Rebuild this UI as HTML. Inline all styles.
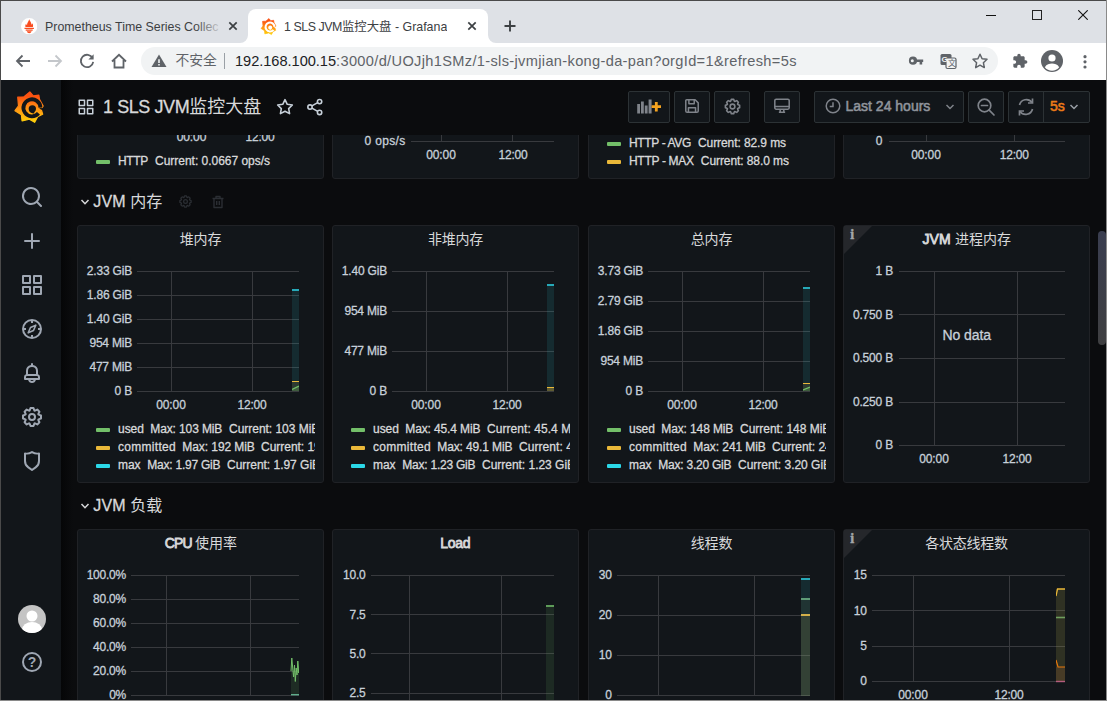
<!DOCTYPE html>
<html lang="zh">
<head>
<meta charset="utf-8">
<title>1 SLS JVM监控大盘 - Grafana</title>
<style>
*{box-sizing:border-box;margin:0;padding:0}
html,body{width:1107px;height:701px;overflow:hidden;background:#0b0c0e}
body{position:relative;font-family:"Liberation Sans","Noto Sans CJK SC",sans-serif;color:#c7d0d9}
.abs{position:absolute}
#win{position:absolute;left:0;top:0;width:1107px;height:701px;overflow:hidden}
#tabbar{position:absolute;left:0;top:0;width:1107px;height:43px;background:#dee1e6}
#addr{position:absolute;left:0;top:43px;width:1107px;height:37px;background:#fff}
.tabtxt{position:absolute;font-size:12.4px;color:#3c4043;white-space:nowrap;top:19px;line-height:16px;overflow:hidden}
#acttab{position:absolute;left:248px;top:9px;width:240px;height:34px;background:#fff;border-radius:8px 8px 0 0}
#pill{position:absolute;left:141px;top:47px;width:857px;height:28px;border-radius:14px;background:#f1f3f4}
.url{position:absolute;left:235px;top:52px;font-size:14.6px;line-height:18px;color:#5f6368;white-space:nowrap;letter-spacing:.34px}
.url b{font-weight:400;color:#202124;letter-spacing:-.03px}
#side{position:absolute;left:1px;top:80px;width:60px;height:621px;background:#12161a}
#navbar{position:absolute;left:61px;top:80px;width:1046px;height:55px;background:#0b0c0e;z-index:5}
#title{position:absolute;left:103px;top:95px;font-size:18px;line-height:24px;letter-spacing:-.42px;-webkit-text-stroke:.3px;color:#d8d9da;white-space:nowrap;z-index:6}
.btn{position:absolute;top:91px;height:32px;border:1px solid #2c3235;border-radius:2px;background:#12161a;z-index:6}
.z6{z-index:6}
.panel{position:absolute;background:#12161a;border:1px solid #202226;border-radius:3px;overflow:hidden}
.pt{position:absolute;text-align:center;font-size:14px;font-weight:700;line-height:18px;color:#d8d9da;white-space:nowrap}
.rowt{position:absolute;font-size:17px;line-height:22px;color:#d8d9da;white-space:nowrap}
.ax{position:absolute;font-size:12px;line-height:14px;color:#c7d0d9;white-space:nowrap;font-weight:400}
.ay{text-align:right}
.ac{text-align:center}
.lg{position:absolute;font-size:12px;line-height:14px;color:#d8d9da;white-space:nowrap;overflow:hidden;height:16px}
.lg span{position:absolute;top:0}
.sw{position:absolute;width:14px;height:4px;border-radius:1px}
.gl{position:absolute;background:#383a3e}
.g,.lg{-webkit-text-stroke:.3px}
i,.c{font-style:normal;-webkit-text-stroke:0}
.lb b{font-weight:400;-webkit-text-stroke:.8px}
#title i{letter-spacing:0}
</style>
</head>
<body>
<div id="win">
<div id="tabbar"></div>
<div id="acttab"></div>
<svg class="abs" style="left:240px;top:35px;" width="8" height="8" viewBox="0 0 8 8"><path d="M0 8 H8 V0 A8 8 0 0 1 0 8Z" fill="#fff"/></svg>
<svg class="abs" style="left:488px;top:35px;" width="8" height="8" viewBox="0 0 8 8"><path d="M8 8 H0 V0 A8 8 0 0 0 8 8Z" fill="#fff"/></svg>
<div id="addr"></div>
<div id="pill"></div>
<div class="abs" style="left:0;top:0;width:1107px;height:1px;background:#4a4a4a;z-index:20"></div>
<div class="abs" style="left:0;top:0;width:1px;height:701px;background:#4a4a4a;z-index:20"></div>
<div class="abs" style="left:1106px;top:0;width:1px;height:701px;background:#8a8a8a;z-index:20"></div>
<div class="abs" style="left:0;top:700px;width:1107px;height:1px;background:#8a8a8a;z-index:20"></div>
<svg class="abs" style="left:20.7px;top:17.8px;" width="16.4" height="16.4" viewBox="0 0 16 16"><circle cx="8" cy="8" r="8" fill="#fff"/><path d="M8 1.200 C8.400 3 10.400 4.200 10.200 6.600 C10.900 6.100 11.100 5.200 11.100 5.200 C12 6.600 11.900 8 11.600 8.900 H4.400 C4 7.800 4.200 6.400 5 5.500 C5.100 6.300 5.500 6.800 5.900 7 C5.600 4.800 7.600 3.400 8 1.200Z M3.400 9.400 H12.600 V10.700 H3.400Z M4.600 11.300 H11.400 V12.400 H4.600Z M5.600 13 H10.400 C10 14.200 9 14.800 8 14.800 S6 14.200 5.600 13Z" fill="#f94d20"/></svg>
<div class="tabtxt" style="left:45px;width:178px">Prometheus Time Series Collec</div>
<div class="abs" style="left:195px;top:14px;width:28px;height:24px;background:linear-gradient(90deg,rgba(222,225,230,0),#dee1e6)"></div>
<svg class="abs" style="left:224.7px;top:18px;" width="16" height="16" viewBox="0 0 16 16"><path d="M4.3 4.3 L11.7 11.7 M11.7 4.3 L4.3 11.7" stroke="#3c4043" stroke-width="1.7" fill="none"/></svg>
<svg width="0" height="0" style="position:absolute"><defs><linearGradient id="gg" x1="0" y1="1" x2="0" y2="0"><stop offset="0" stop-color="#ffd20a"/><stop offset="0.5" stop-color="#ff8c14"/><stop offset="0.85" stop-color="#fb5310"/><stop offset="1" stop-color="#fb4f14"/></linearGradient></defs></svg>
<svg class="abs" style="left:258.7px;top:15.5px;" width="20.8" height="20.8" viewBox="0 0 40 40"><path d="M19.1 4.9 L22.6 9.0 L28.2 8.2 L28.9 12.5 L32.6 19.2 L30.6 22.5 L32.1 27.6 L27.0 30.0 L24.0 35.8 L18.6 32.6 L11.2 34.4 L10.5 28.2 L4.0 24.0 L7.6 19.2 L6.8 10.3 L13.2 9.9Z" fill="url(#gg)" stroke="url(#gg)" stroke-width="1.2" stroke-linejoin="round"/><path d="M29.800 20.900 A8.600 8.600 0 1 0 27.800 26.600" stroke="#fff" stroke-width="3.900" fill="none"/><path d="M28.500 21.300 L35 21.600 L35 24.500 L30.300 22.800Z" fill="#fff"/><circle cx="21.6" cy="22.1" r="3.7" fill="#fff"/><path d="M18.9 23.0 Q19.8 26.6 23.6 26.0" stroke="#fff" stroke-width="1.3" fill="none"/></svg>
<div class="tabtxt" style="left:284px"><span style="letter-spacing:-.45px">1 SLS JVM</span>监控大盘 - Grafana</div>
<svg class="abs" style="left:464px;top:18px;" width="16" height="16" viewBox="0 0 16 16"><path d="M4.3 4.3 L11.7 11.7 M11.7 4.3 L4.3 11.7" stroke="#3c4043" stroke-width="1.7" fill="none"/></svg>
<svg class="abs" style="left:502px;top:18px;" width="16" height="16" viewBox="0 0 16 16"><path d="M8 2.500 V13.500 M2.500 8 H13.500" stroke="#3c4043" stroke-width="1.900" fill="none"/></svg>
<div class="abs" style="left:986px;top:15px;width:10px;height:1px;background:#111"></div>
<div class="abs" style="left:1032px;top:10px;width:10px;height:10px;border:1px solid #222"></div>
<svg class="abs" style="left:1078px;top:10px;" width="10" height="10" viewBox="0 0 10 10"><path d="M.3 .3 L9.700 9.700 M9.700 .3 L.3 9.700" stroke="#111" stroke-width="1.100" fill="none"/></svg>
<svg class="abs" style="left:14px;top:52px;" width="18" height="18" viewBox="0 0 18 18"><path d="M16 9 H3 M8.500 3.500 L3 9 L8.500 14.500" stroke="#5f6368" stroke-width="1.800" fill="none"/></svg>
<svg class="abs" style="left:46px;top:52px;" width="18" height="18" viewBox="0 0 18 18"><path d="M2 9 H15 M9.500 3.500 L15 9 L9.500 14.500" stroke="#c4c7cb" stroke-width="1.800" fill="none"/></svg>
<svg class="abs" style="left:78px;top:52px;" width="18" height="18" viewBox="0 0 18 18"><path d="M14.600 6.200 A6.200 6.200 0 1 0 15.200 9.800" stroke="#5f6368" stroke-width="1.800" fill="none"/><path d="M15.600 2.200 V7.400 H10.400Z" fill="#5f6368"/></svg>
<svg class="abs" style="left:110px;top:52px;" width="18" height="18" viewBox="0 0 18 18"><path d="M2 9.500 L9 2.800 L16 9.500 M4.500 8 V15.500 H13.500 V8" stroke="#5f6368" stroke-width="1.800" fill="none"/></svg>
<svg class="abs" style="left:151px;top:54px;" width="16" height="14" viewBox="0 0 16 14"><path d="M8 .5 L15.500 13 H.5Z" fill="#5f6368"/><path d="M7.200 5.200 H8.800 V9 H7.200Z M7.200 10 H8.800 V11.600 H7.200Z" fill="#f1f3f4"/></svg>
<div class="abs" style="left:175.500px;top:52px;font-size:13.800px;line-height:18px;color:#5f6368;white-space:nowrap">不安全</div>
<div class="abs" style="left:224px;top:53px;width:1px;height:16px;background:#9aa0a6"></div>
<div class="url"><b>192.168.100.15</b>:3000/d/UOJjh1SMz/1-sls-jvmjian-kong-da-pan?orgId=1&amp;refresh=5s</div>
<svg class="abs" style="left:907px;top:53px;" width="18" height="16" viewBox="0 0 18 16"><circle cx="6" cy="7.700" r="4.100" fill="#5f6368"/><circle cx="5.300" cy="7.700" r="1.500" fill="#f1f3f4"/><path d="M9 6.400 H16.200 V9 H15.200 V11.400 H12.600 V9 H9Z" fill="#5f6368"/></svg>
<svg class="abs" style="left:939px;top:52px;" width="18" height="18" viewBox="0 0 18 18"><rect x="1.500" y="2" width="11" height="11" rx="1.500" fill="#5f6368"/><rect x="7" y="6" width="10" height="10.500" rx="1.500" fill="#f1f3f4" stroke="#5f6368" stroke-width="1.200"/></svg><div class="abs" style="left:941.500px;top:54.500px;font-size:8px;line-height:9px;font-weight:700;color:#f1f3f4">G</div><div class="abs" style="left:948px;top:59px;font-size:8px;line-height:9px;color:#5f6368">文</div>
<svg class="abs" style="left:971px;top:52px;" width="18" height="18" viewBox="0 0 18 18"><path d="M9 2.200 L11.100 6.700 L16 7.300 L12.400 10.700 L13.300 15.600 L9 13.200 L4.700 15.600 L5.600 10.700 L2 7.300 L6.900 6.700Z" stroke="#5f6368" stroke-width="1.500" fill="none" stroke-linejoin="round"/></svg>
<svg class="abs" style="left:1011.9px;top:53px;" width="16" height="16" viewBox="0 0 24 24"><path d="M20.500 11H19V7c0-1.100-.900-2-2-2h-4V3.500C13 2.120 11.880 1 10.500 1S8 2.120 8 3.500V5H4c-1.100 0-1.990.900-1.990 2v3.800H3.500c1.490 0 2.700 1.210 2.700 2.700s-1.210 2.700-2.700 2.700H2V20c0 1.100.900 2 2 2h3.800v-1.500c0-1.490 1.210-2.700 2.700-2.700 1.490 0 2.700 1.210 2.700 2.700V22H17c1.100 0 2-.900 2-2v-4h1.500c1.380 0 2.500-1.120 2.500-2.500S21.880 11 20.500 11z" fill="#5f6368"/></svg>
<svg class="abs" style="left:1040px;top:48.8px;" width="24" height="24" viewBox="0 0 24 24"><circle cx="12" cy="12" r="11" fill="#5f6368"/><circle cx="12" cy="9" r="3.600" fill="#fff"/><path d="M4.800 18.200 C6.500 15.200 9.500 14.600 12 14.600 S17.500 15.200 19.200 18.200 A9 9 0 0 1 4.800 18.200Z" fill="#fff"/></svg>
<svg class="abs" style="left:1083px;top:52px;" width="4" height="18" viewBox="0 0 4 18"><circle cx="2" cy="4.700" r="1.600" fill="#5f6368"/><circle cx="2" cy="9.800" r="1.600" fill="#5f6368"/><circle cx="2" cy="15" r="1.600" fill="#5f6368"/></svg>
<div id="side"></div>
<div id="navbar"></div>
<div class="abs" style="left:61px;top:80px;width:12px;height:621px;background:linear-gradient(90deg,#050607,#0b0c0e);z-index:5"></div>
<svg class="abs" style="left:11.45px;top:86.85px;" width="39.5" height="39.5" viewBox="0 0 40 40"><path d="M19.1 4.9 L22.6 9.0 L28.2 8.2 L28.9 12.5 L32.6 19.2 L30.6 22.5 L32.1 27.6 L27.0 30.0 L24.0 35.8 L18.6 32.6 L11.2 34.4 L10.5 28.2 L4.0 24.0 L7.6 19.2 L6.8 10.3 L13.2 9.9Z" fill="url(#gg)" stroke="url(#gg)" stroke-width="1.2" stroke-linejoin="round"/><path d="M29.800 20.900 A8.600 8.600 0 1 0 27.800 26.600" stroke="#12161a" stroke-width="3.900" fill="none"/><path d="M28.500 21.300 L35 21.600 L35 24.500 L30.300 22.800Z" fill="#12161a"/><circle cx="21.6" cy="22.1" r="3.7" fill="#12161a"/><path d="M18.9 23.0 Q19.8 26.6 23.6 26.0" stroke="#12161a" stroke-width="1.3" fill="none"/></svg>
<svg class="abs" style="left:20.0px;top:185.0px;" width="24" height="24" viewBox="0 0 24 24"><g fill="#9fa7b3"><path d="M21.71,20.29,18,16.61A9,9,0,1,0,16.61,18l3.68,3.68a1,1,0,0,0,1.42,0A1,1,0,0,0,21.71,20.29ZM11,18a7,7,0,1,1,7-7A7,7,0,0,1,11,18Z"/></g></svg>
<svg class="abs" style="left:20.0px;top:229.0px;" width="24" height="24" viewBox="0 0 24 24"><g fill="#9fa7b3"><path d="M19,11H13V5a1,1,0,0,0-2,0v6H5a1,1,0,0,0,0,2h6v6a1,1,0,0,0,2,0V13h6a1,1,0,0,0,0-2Z"/></g></svg>
<svg class="abs" style="left:20.0px;top:273.0px;" width="24" height="24" viewBox="0 0 24 24"><g fill="#9fa7b3"><path d="M10,13H3a1,1,0,0,0-1,1v7a1,1,0,0,0,1,1h7a1,1,0,0,0,1-1V14A1,1,0,0,0,10,13ZM9,20H4V15H9ZM21,2H14a1,1,0,0,0-1,1v7a1,1,0,0,0,1,1h7a1,1,0,0,0,1-1V3A1,1,0,0,0,21,2ZM20,9H15V4h5Zm1,4H14a1,1,0,0,0-1,1v7a1,1,0,0,0,1,1h7a1,1,0,0,0,1-1V14A1,1,0,0,0,21,13Zm-1,7H15V15h5ZM10,2H3A1,1,0,0,0,2,3v7a1,1,0,0,0,1,1h7a1,1,0,0,0,1-1V3A1,1,0,0,0,10,2ZM9,9H4V4H9Z"/></g></svg>
<svg class="abs" style="left:20px;top:317px;" width="24" height="24" viewBox="0 0 24 24"><circle cx="12" cy="12" r="9" stroke="#9fa7b3" stroke-width="2" fill="none"/><path d="M12 3 v3 M12 18 v3 M3 12 h3 M18 12 h3" stroke="#9fa7b3" stroke-width="2"/><path d="M15.800 8.200 L13.500 13.500 L8.200 15.800 L10.500 10.500Z" fill="none" stroke="#9fa7b3" stroke-width="1.600" stroke-linejoin="round"/></svg>
<svg class="abs" style="left:20.0px;top:361.0px;" width="24" height="24" viewBox="0 0 24 24"><g fill="#9fa7b3"><path d="M18,13.18V10a6,6,0,0,0-5-5.910V3a1,1,0,0,0-2,0V4.090A6,6,0,0,0,6,10v3.180A3,3,0,0,0,4,16v2a1,1,0,0,0,1,1H8.140a4,4,0,0,0,7.720,0H19a1,1,0,0,0,1-1V16A3,3,0,0,0,18,13.180ZM8,10a4,4,0,0,1,8,0v3H8Zm4,10a2,2,0,0,1-1.720-1h3.440A2,2,0,0,1,12,20Zm6-3H6V16a1,1,0,0,1,1-1H17a1,1,0,0,1,1,1Z"/></g></svg>
<svg class="abs" style="left:20.0px;top:405.0px;" width="24" height="24" viewBox="0 0 24 24"><g fill="#9fa7b3"><path d="M21.32,9.55l-1.890-.63.890-1.780A1,1,0,0,0,20.130,6L18,3.870a1,1,0,0,0-1.150-.19l-1.780.89-.63-1.890A1,1,0,0,0,13.500,2h-3a1,1,0,0,0-.95.680L8.920,4.570,7.140,3.680A1,1,0,0,0,6,3.870L3.870,6a1,1,0,0,0-.19,1.150l.89,1.780-1.890.63A1,1,0,0,0,2,10.500v3a1,1,0,0,0,.68.950l1.890.63-.89,1.780A1,1,0,0,0,3.870,18L6,20.130a1,1,0,0,0,1.150.19l1.780-.89.630,1.890a1,1,0,0,0,.95.680h3a1,1,0,0,0,.95-.68l.63-1.890,1.780.89A1,1,0,0,0,18,20.130L20.130,18a1,1,0,0,0,.19-1.150l-.89-1.780,1.890-.63A1,1,0,0,0,22,13.500v-3A1,1,0,0,0,21.320,9.550ZM20,12.780l-1.200.4A2,2,0,0,0,17.640,16l.57,1.140-1.100,1.100L16,17.640a2,2,0,0,0-2.790,1.160l-.4,1.200H11.220l-.4-1.200A2,2,0,0,0,8,17.640l-1.140.57-1.100-1.100L6.360,16A2,2,0,0,0,5.200,13.180L4,12.780V11.220l1.200-.4A2,2,0,0,0,6.360,8L5.790,6.890l1.100-1.100L8,6.360A2,2,0,0,0,10.820,5.200l.4-1.200h1.560l.4,1.200A2,2,0,0,0,16,6.360l1.140-.57,1.100,1.100L17.640,8a2,2,0,0,0,1.160,2.790l1.200.4ZM12,8a4,4,0,1,0,4,4A4,4,0,0,0,12,8Zm0,6a2,2,0,1,1,2-2A2,2,0,0,1,12,14Z"/></g></svg>
<svg class="abs" style="left:20.0px;top:449.0px;" width="24" height="24" viewBox="0 0 24 24"><g fill="#9fa7b3"><path d="M19.630,3.650a1,1,0,0,0-.84-.2,8,8,0,0,1-6.220-1.270,1,1,0,0,0-1.140,0A8,8,0,0,1,5.210,3.450a1,1,0,0,0-.84.2A1,1,0,0,0,4,4.430v7.450a9,9,0,0,0,3.770,7.330l3.650,2.600a1,1,0,0,0,1.160,0l3.650-2.600A9,9,0,0,0,20,11.880V4.430A1,1,0,0,0,19.630,3.650ZM18,11.880a7,7,0,0,1-2.930,5.700L12,19.770,8.930,17.580A7,7,0,0,1,6,11.880V5.580a10,10,0,0,0,6-1.390,10,10,0,0,0,6,1.390Z"/></g></svg>
<svg class="abs" style="left:18px;top:605px;" width="28" height="28" viewBox="0 0 28 28"><defs><clipPath id="avc"><circle cx="14" cy="14" r="14"/></clipPath></defs><circle cx="14" cy="14" r="14" fill="#c4c4c4"/><g clip-path="url(#avc)"><circle cx="14" cy="11" r="5.500" fill="#fff"/><ellipse cx="14" cy="25" rx="10" ry="8" fill="#fff"/></g></svg>
<svg class="abs" style="left:20px;top:650px;" width="24" height="24" viewBox="0 0 24 24"><circle cx="12" cy="12" r="9" stroke="#9fa7b3" stroke-width="2" fill="none"/></svg><div class="abs" style="left:20px;top:653px;width:24px;text-align:center;font-size:14px;line-height:18px;font-weight:700;color:#9fa7b3">?</div>
<svg class="abs" style="left:77px;top:98px;z-index:6" width="18" height="18" viewBox="0 0 24 24"><g fill="#c7d0d9"><path d="M10,13H3a1,1,0,0,0-1,1v7a1,1,0,0,0,1,1h7a1,1,0,0,0,1-1V14A1,1,0,0,0,10,13ZM9,20H4V15H9ZM21,2H14a1,1,0,0,0-1,1v7a1,1,0,0,0,1,1h7a1,1,0,0,0,1-1V3A1,1,0,0,0,21,2ZM20,9H15V4h5Zm1,4H14a1,1,0,0,0-1,1v7a1,1,0,0,0,1,1h7a1,1,0,0,0,1-1V14A1,1,0,0,0,21,13Zm-1,7H15V15h5ZM10,2H3A1,1,0,0,0,2,3v7a1,1,0,0,0,1,1h7a1,1,0,0,0,1-1V3A1,1,0,0,0,10,2ZM9,9H4V4H9Z"/></g></svg>
<div id="title">1 SLS JVM<i>监控大盘</i></div>
<svg class="abs" style="left:275px;top:97px;z-index:6" width="20" height="20" viewBox="0 0 24 24"><path d="M12 3.200 L14.700 8.800 L20.800 9.600 L16.400 13.900 L17.500 20 L12 17.100 L6.500 20 L7.600 13.900 L3.200 9.600 L9.300 8.800Z" stroke="#c7d0d9" stroke-width="1.900" fill="none" stroke-linejoin="round"/></svg>
<svg class="abs" style="left:305px;top:97px;z-index:6" width="20" height="20" viewBox="0 0 24 24"><circle cx="17.500" cy="5.500" r="2.600" stroke="#c7d0d9" stroke-width="1.900" fill="none"/><circle cx="6" cy="12" r="2.600" stroke="#c7d0d9" stroke-width="1.900" fill="none"/><circle cx="17.500" cy="18.500" r="2.600" stroke="#c7d0d9" stroke-width="1.900" fill="none"/><path d="M8.300 10.700 L15.200 6.800 M8.300 13.300 L15.200 17.200" stroke="#c7d0d9" stroke-width="1.900"/></svg>
<div class="btn" style="left:628px;width:42px"></div>
<div class="btn" style="left:674px;width:36px"></div>
<div class="btn" style="left:714px;width:36px"></div>
<div class="btn" style="left:764px;width:36px"></div>
<div class="btn" style="left:814px;width:150px"></div>
<div class="btn" style="left:968px;width:36px"></div>
<div class="btn" style="left:1008px;width:82px"></div>
<div class="abs z6" style="left:1043px;top:92px;width:1px;height:30px;background:#2c3235"></div>
<svg class="abs" style="left:636px;top:97px;z-index:6" width="28" height="18" viewBox="0 0 28 18"><path d="M1.200 7 h2.800 v9.500 h-2.800z M5 4.500 h2.800 v12 h-2.800z M8.800 8.500 h2.800 v8 h-2.800z M12.600 2.500 h3 v14 h-3z" fill="#7f838a"/><path d="M20.300 5 v9.500 M15.600 9.700 h9.400" stroke="#f5a31f" stroke-width="2.800"/></svg>
<svg class="abs" style="left:684px;top:98px;z-index:6" width="16" height="16" viewBox="0 0 18 18"><path d="M3 2 H12.500 L16 5.500 V14.500 A1.500 1.500 0 0 1 14.500 16 H3.500 A1.500 1.500 0 0 1 2 14.500 V3 A1 1 0 0 1 3 2Z M5.500 2 V6.500 H11.500 V2 M5 16 V11 H13 V16" stroke="#7f838a" stroke-width="1.700" fill="none" stroke-linejoin="round"/></svg>
<svg class="abs" style="left:722.5px;top:96.8px;z-index:6" width="19" height="19" viewBox="0 0 24 24"><g fill="#7f838a"><path d="M21.32,9.55l-1.890-.63.890-1.780A1,1,0,0,0,20.130,6L18,3.870a1,1,0,0,0-1.150-.19l-1.780.89-.63-1.890A1,1,0,0,0,13.500,2h-3a1,1,0,0,0-.95.680L8.920,4.570,7.140,3.680A1,1,0,0,0,6,3.870L3.870,6a1,1,0,0,0-.19,1.150l.89,1.780-1.890.63A1,1,0,0,0,2,10.500v3a1,1,0,0,0,.68.950l1.890.63-.89,1.780A1,1,0,0,0,3.870,18L6,20.130a1,1,0,0,0,1.150.19l1.780-.89.630,1.890a1,1,0,0,0,.95.680h3a1,1,0,0,0,.95-.68l.63-1.890,1.780.89A1,1,0,0,0,18,20.130L20.130,18a1,1,0,0,0,.19-1.150l-.89-1.780,1.890-.63A1,1,0,0,0,22,13.500v-3A1,1,0,0,0,21.320,9.550ZM20,12.780l-1.200.4A2,2,0,0,0,17.640,16l.57,1.140-1.100,1.100L16,17.640a2,2,0,0,0-2.790,1.160l-.4,1.200H11.220l-.4-1.200A2,2,0,0,0,8,17.640l-1.140.57-1.100-1.100L6.360,16A2,2,0,0,0,5.200,13.180L4,12.780V11.220l1.200-.4A2,2,0,0,0,6.360,8L5.790,6.890l1.100-1.100L8,6.360A2,2,0,0,0,10.820,5.200l.4-1.200h1.560l.4,1.200A2,2,0,0,0,16,6.360l1.140-.57,1.100,1.100L17.640,8a2,2,0,0,0,1.160,2.790l1.200.4ZM12,8a4,4,0,1,0,4,4A4,4,0,0,0,12,8Zm0,6a2,2,0,1,1,2-2A2,2,0,0,1,12,14Z"/></g></svg>
<svg class="abs" style="left:773px;top:97px;z-index:6" width="18" height="18" viewBox="0 0 20 20"><rect x="2" y="2.500" width="16" height="11" rx="1.500" stroke="#7f838a" stroke-width="1.700" fill="none"/><path d="M2 10.500 H18 M6.500 17 H13.500 M8 13.500 V17 M12 13.500 V17" stroke="#7f838a" stroke-width="1.700" fill="none"/></svg>
<svg class="abs" style="left:824.5px;top:98px;z-index:6" width="16" height="16" viewBox="0 0 17 17"><circle cx="8.500" cy="8.500" r="7.200" stroke="#7f838a" stroke-width="1.600" fill="none"/><path d="M8.500 4.500 V9 H5" stroke="#7f838a" stroke-width="1.600" fill="none"/></svg>
<div class="abs z6" style="left:845.500px;top:97px;font-size:14px;line-height:18px;color:#8f949c;white-space:nowrap;letter-spacing:0px;-webkit-text-stroke:.55px">Last 24 hours</div>
<svg class="abs" style="left:944px;top:101.5px;z-index:6" width="12" height="10" viewBox="0 0 12 10"><path d="M2.500 3 L6 6.500 L9.500 3" stroke="#7f838a" stroke-width="1.500" fill="none"/></svg>
<svg class="abs" style="left:976px;top:96.5px;z-index:6" width="20" height="20" viewBox="0 0 20 20"><circle cx="8.500" cy="8.500" r="6.300" stroke="#7f838a" stroke-width="1.700" fill="none"/><path d="M13.200 13.200 L18 18 M5.500 8.500 H11.500" stroke="#7f838a" stroke-width="1.700" fill="none" stroke-linecap="round"/></svg>
<svg class="abs" style="left:1016px;top:96.5px;z-index:6" width="20" height="20" viewBox="0 0 20 20"><path d="M3.500 8 A7 7 0 0 1 16 5.500 M16.500 12 A7 7 0 0 1 4 14.500" stroke="#7f838a" stroke-width="1.700" fill="none"/><path d="M16.500 1.500 V6 H12 M3.500 18.500 V14 H8" stroke="#7f838a" stroke-width="1.700" fill="none"/></svg>
<div class="abs z6" style="left:1050px;top:96.500px;font-size:14px;line-height:18px;color:#eb7b18;white-space:nowrap;-webkit-text-stroke:.55px">5s</div>
<svg class="abs" style="left:1068px;top:101.5px;z-index:6" width="12" height="10" viewBox="0 0 12 10"><path d="M2.500 3 L6 6.500 L9.500 3" stroke="#9a9fa7" stroke-width="1.500" fill="none"/></svg>
<div class="abs" style="left:1098px;top:231px;width:8px;height:114px;border-radius:4px;background:linear-gradient(180deg,#3a3e50,#3f3f41)"></div>
<div class="panel" style="left:77px;top:100px;width:247px;height:79px"></div>
<div class="panel" style="left:332px;top:100px;width:247px;height:79px"></div>
<div class="panel" style="left:588px;top:100px;width:247px;height:79px"></div>
<div class="panel" style="left:843px;top:100px;width:247px;height:79px"></div>
<div class="abs g " style="left:176.70px;top:130.14px;font-size:12px;line-height:15px;letter-spacing:-0.086px;color:#c7d0d9;white-space:nowrap;">00:00</div>
<div class="abs g " style="left:245.50px;top:130.14px;font-size:12px;line-height:15px;letter-spacing:-0.206px;color:#c7d0d9;white-space:nowrap;">12:00</div>
<div class="sw" style="left:96px;top:160.0px;background:#73bf69"></div>
<div class="abs g " style="left:118.00px;top:153.64px;font-size:12px;line-height:15px;letter-spacing:-0.333px;color:#d8d9da;white-space:nowrap;">HTTP</div>
<div class="abs g " style="left:155.00px;top:153.64px;font-size:12px;line-height:15px;letter-spacing:-0.019px;color:#d8d9da;white-space:nowrap;">Current: 0.0667 ops/s</div>
<div class="gl" style="left:411px;top:141px;width:143px;height:1px;background:#383a3e"></div>
<div class="gl" style="left:441px;top:135px;width:1px;height:6px;background:#383a3e"></div>
<div class="gl" style="left:512px;top:135px;width:1px;height:6px;background:#383a3e"></div>
<div class="abs g " style="left:364.60px;top:134.44px;font-size:12px;line-height:15px;letter-spacing:0.330px;color:#c7d0d9;white-space:nowrap;">0 ops/s</div>
<div class="abs g " style="left:426.20px;top:148.44px;font-size:12px;line-height:15px;letter-spacing:-0.086px;color:#c7d0d9;white-space:nowrap;">00:00</div>
<div class="abs g " style="left:498.50px;top:148.44px;font-size:12px;line-height:15px;letter-spacing:-0.206px;color:#c7d0d9;white-space:nowrap;">12:00</div>
<div class="sw" style="left:607px;top:142.0px;background:#73bf69"></div>
<div class="abs g " style="left:629.00px;top:135.64px;font-size:12px;line-height:15px;letter-spacing:-0.357px;color:#d8d9da;white-space:nowrap;">HTTP - AVG</div>
<div class="abs g " style="left:698.00px;top:135.64px;font-size:12px;line-height:15px;letter-spacing:-0.085px;color:#d8d9da;white-space:nowrap;">Current: 82.9 ms</div>
<div class="sw" style="left:607px;top:160.0px;background:#eab839"></div>
<div class="abs g " style="left:629.00px;top:153.64px;font-size:12px;line-height:15px;letter-spacing:-0.308px;color:#d8d9da;white-space:nowrap;">HTTP - MAX</div>
<div class="abs g " style="left:700.80px;top:153.64px;font-size:12px;line-height:15px;letter-spacing:-0.085px;color:#d8d9da;white-space:nowrap;">Current: 88.0 ms</div>
<div class="gl" style="left:889px;top:141px;width:176px;height:1px;background:#383a3e"></div>
<div class="gl" style="left:926px;top:135px;width:1px;height:6px;background:#383a3e"></div>
<div class="gl" style="left:1014px;top:135px;width:1px;height:6px;background:#383a3e"></div>
<div class="abs g " style="left:875.73px;top:134.44px;font-size:12px;line-height:15px;letter-spacing:-0.100px;color:#c7d0d9;white-space:nowrap;">0</div>
<div class="abs g " style="left:911.20px;top:148.44px;font-size:12px;line-height:15px;letter-spacing:-0.086px;color:#c7d0d9;white-space:nowrap;">00:00</div>
<div class="abs g " style="left:999.80px;top:148.44px;font-size:12px;line-height:15px;letter-spacing:-0.206px;color:#c7d0d9;white-space:nowrap;">12:00</div>
<svg class="abs" style="left:80px;top:198px;" width="10" height="8" viewBox="0 0 10 8"><path d="M1.500 2 L5 5.700 L8.500 2" stroke="#d8d9da" stroke-width="1.500" fill="none"/></svg>
<div class="abs g " style="left:93.30px;top:191.86px;font-size:16px;line-height:20px;letter-spacing:0.092px;color:#d8d9da;white-space:nowrap;">JVM <i>内存</i></div>
<svg class="abs" style="left:178.0px;top:194.0px;" width="15" height="15" viewBox="0 0 24 24"><g fill="#2b2e33"><path d="M21.32,9.55l-1.890-.63.890-1.780A1,1,0,0,0,20.130,6L18,3.870a1,1,0,0,0-1.150-.19l-1.780.89-.63-1.890A1,1,0,0,0,13.500,2h-3a1,1,0,0,0-.95.680L8.920,4.570,7.140,3.680A1,1,0,0,0,6,3.870L3.870,6a1,1,0,0,0-.19,1.150l.89,1.780-1.890.63A1,1,0,0,0,2,10.500v3a1,1,0,0,0,.68.950l1.890.63-.89,1.780A1,1,0,0,0,3.870,18L6,20.130a1,1,0,0,0,1.150.19l1.780-.89.630,1.890a1,1,0,0,0,.95.680h3a1,1,0,0,0,.95-.68l.63-1.890,1.780.89A1,1,0,0,0,18,20.130L20.130,18a1,1,0,0,0,.19-1.150l-.89-1.780,1.890-.63A1,1,0,0,0,22,13.500v-3A1,1,0,0,0,21.320,9.550ZM20,12.780l-1.200.4A2,2,0,0,0,17.640,16l.57,1.140-1.100,1.100L16,17.640a2,2,0,0,0-2.790,1.160l-.4,1.200H11.220l-.4-1.200A2,2,0,0,0,8,17.640l-1.140.57-1.100-1.100L6.360,16A2,2,0,0,0,5.200,13.180L4,12.780V11.220l1.200-.4A2,2,0,0,0,6.360,8L5.790,6.890l1.100-1.100L8,6.360A2,2,0,0,0,10.820,5.200l.4-1.200h1.560l.4,1.200A2,2,0,0,0,16,6.360l1.140-.57,1.100,1.100L17.640,8a2,2,0,0,0,1.160,2.790l1.200.4ZM12,8a4,4,0,1,0,4,4A4,4,0,0,0,12,8Zm0,6a2,2,0,1,1,2-2A2,2,0,0,1,12,14Z"/></g></svg>
<svg class="abs" style="left:210px;top:194px;" width="16" height="16" viewBox="0 0 16 16"><path d="M2.500 4.500 H13.500 M6 4.500 V2.500 H10 V4.500 M4 4.500 V13.500 H12 V4.500 M6.700 7 V11 M9.300 7 V11" stroke="#2b2e33" stroke-width="1.400" fill="none" stroke-linejoin="round"/></svg>
<div class="panel" style="left:77px;top:225px;width:247px;height:258px"></div>
<div class="panel" style="left:332px;top:225px;width:247px;height:258px"></div>
<div class="panel" style="left:588px;top:225px;width:247px;height:258px"></div>
<div class="panel" style="left:843px;top:225px;width:247px;height:258px"></div>
<div class="abs g  c" style="left:179.81px;top:230.15px;font-size:14px;line-height:18px;letter-spacing:-0.210px;color:#d8d9da;white-space:nowrap;">堆内存</div>
<div class="gl" style="left:137px;top:271px;width:162px;height:1px;background:#383a3e"></div>
<div class="gl" style="left:137px;top:295px;width:162px;height:1px;background:#383a3e"></div>
<div class="gl" style="left:137px;top:319px;width:162px;height:1px;background:#383a3e"></div>
<div class="gl" style="left:137px;top:343px;width:162px;height:1px;background:#383a3e"></div>
<div class="gl" style="left:137px;top:367px;width:162px;height:1px;background:#383a3e"></div>
<div class="gl" style="left:137px;top:391px;width:162px;height:1px;background:#383a3e"></div>
<div class="gl" style="left:171px;top:271px;width:1px;height:121px;background:#383a3e"></div>
<div class="gl" style="left:252px;top:271px;width:1px;height:121px;background:#383a3e"></div>
<div class="abs g " style="left:86.85px;top:264.44px;font-size:12px;line-height:15px;letter-spacing:-0.193px;color:#c7d0d9;white-space:nowrap;">2.33 GiB</div>
<div class="abs g " style="left:86.85px;top:288.44px;font-size:12px;line-height:15px;letter-spacing:-0.193px;color:#c7d0d9;white-space:nowrap;">1.86 GiB</div>
<div class="abs g " style="left:86.85px;top:312.44px;font-size:12px;line-height:15px;letter-spacing:-0.193px;color:#c7d0d9;white-space:nowrap;">1.40 GiB</div>
<div class="abs g " style="left:89.43px;top:336.44px;font-size:12px;line-height:15px;letter-spacing:-0.208px;color:#c7d0d9;white-space:nowrap;">954 MiB</div>
<div class="abs g " style="left:89.43px;top:360.44px;font-size:12px;line-height:15px;letter-spacing:-0.208px;color:#c7d0d9;white-space:nowrap;">477 MiB</div>
<div class="abs g " style="left:114.58px;top:384.44px;font-size:12px;line-height:15px;letter-spacing:-0.198px;color:#c7d0d9;white-space:nowrap;">0 B</div>
<div class="abs g " style="left:156.20px;top:397.94px;font-size:12px;line-height:15px;letter-spacing:-0.086px;color:#c7d0d9;white-space:nowrap;">00:00</div>
<div class="abs g " style="left:237.50px;top:397.94px;font-size:12px;line-height:15px;letter-spacing:-0.206px;color:#c7d0d9;white-space:nowrap;">12:00</div>
<div class="abs" style="left:292px;top:289px;width:7px;height:102px;background:rgba(43,216,232,.11);"></div>
<div class="abs" style="left:292px;top:289px;width:7px;height:1.5px;background:#27a9b8;"></div>
<div class="abs" style="left:292px;top:381px;width:7px;height:10px;background:rgba(234,184,57,.12);"></div>
<div class="abs" style="left:292px;top:381px;width:7px;height:1px;background:#eab839;"></div>
<svg class="abs" style="left:292px;top:383px;" width="7" height="8" viewBox="0 0 7 8"><path d="M0 6.500 L7 3" stroke="#73bf69" stroke-width="1.200" fill="none"/><path d="M0 6.500 L7 3 V8 H0Z" fill="rgba(115,191,105,.25)"/></svg>
<div class="sw" style="left:96px;top:428.0px;background:#73bf69"></div>
<div class="lg" style="left:118px;top:421.84px;width:197px;line-height:15px"><span style="left:0.00px;letter-spacing:-0.030px">used</span><span style="left:32.30px;letter-spacing:-0.122px">Max: 103 MiB</span><span style="left:111.00px;letter-spacing:-0.025px">Current: 103 MiB</span></div>
<div class="sw" style="left:96px;top:446.0px;background:#eab839"></div>
<div class="lg" style="left:118px;top:439.84px;width:197px;line-height:15px"><span style="left:0.00px;letter-spacing:0.295px">committed</span><span style="left:64.30px;letter-spacing:-0.072px">Max: 192 MiB</span><span style="left:143.00px;letter-spacing:-0.025px">Current: 192 MiB</span></div>
<div class="sw" style="left:96px;top:464.0px;background:#2bd8e8"></div>
<div class="lg" style="left:118px;top:457.84px;width:197px;line-height:15px"><span style="left:0.00px;letter-spacing:-0.057px">max</span><span style="left:29.30px;letter-spacing:-0.233px">Max: 1.97 GiB</span><span style="left:109.00px;letter-spacing:-0.022px">Current: 1.97 GiB</span></div>
<div class="abs g  c" style="left:427.92px;top:230.15px;font-size:14px;line-height:18px;letter-spacing:-0.210px;color:#d8d9da;white-space:nowrap;">非堆内存</div>
<div class="gl" style="left:392px;top:271px;width:162px;height:1px;background:#383a3e"></div>
<div class="gl" style="left:392px;top:311px;width:162px;height:1px;background:#383a3e"></div>
<div class="gl" style="left:392px;top:351px;width:162px;height:1px;background:#383a3e"></div>
<div class="gl" style="left:392px;top:391px;width:162px;height:1px;background:#383a3e"></div>
<div class="gl" style="left:426px;top:271px;width:1px;height:121px;background:#383a3e"></div>
<div class="gl" style="left:507px;top:271px;width:1px;height:121px;background:#383a3e"></div>
<div class="abs g " style="left:341.85px;top:264.44px;font-size:12px;line-height:15px;letter-spacing:-0.193px;color:#c7d0d9;white-space:nowrap;">1.40 GiB</div>
<div class="abs g " style="left:344.43px;top:304.44px;font-size:12px;line-height:15px;letter-spacing:-0.208px;color:#c7d0d9;white-space:nowrap;">954 MiB</div>
<div class="abs g " style="left:344.43px;top:344.44px;font-size:12px;line-height:15px;letter-spacing:-0.208px;color:#c7d0d9;white-space:nowrap;">477 MiB</div>
<div class="abs g " style="left:369.58px;top:384.44px;font-size:12px;line-height:15px;letter-spacing:-0.198px;color:#c7d0d9;white-space:nowrap;">0 B</div>
<div class="abs g " style="left:411.20px;top:397.94px;font-size:12px;line-height:15px;letter-spacing:-0.086px;color:#c7d0d9;white-space:nowrap;">00:00</div>
<div class="abs g " style="left:492.50px;top:397.94px;font-size:12px;line-height:15px;letter-spacing:-0.206px;color:#c7d0d9;white-space:nowrap;">12:00</div>
<div class="abs" style="left:547px;top:284px;width:7px;height:107px;background:rgba(43,216,232,.11);"></div>
<div class="abs" style="left:547px;top:284px;width:7px;height:1.5px;background:#27a9b8;"></div>
<div class="abs" style="left:547px;top:387px;width:7px;height:4px;background:rgba(234,184,57,.35);"></div>
<div class="abs" style="left:547px;top:387px;width:7px;height:1px;background:#eab839;"></div>
<div class="sw" style="left:351px;top:428.0px;background:#73bf69"></div>
<div class="lg" style="left:373px;top:421.84px;width:197px;line-height:15px"><span style="left:0.00px;letter-spacing:-0.030px">used</span><span style="left:32.30px;letter-spacing:-0.130px">Max: 45.4 MiB</span><span style="left:114.00px;letter-spacing:0.057px">Current: 45.4 MiB</span></div>
<div class="sw" style="left:351px;top:446.0px;background:#eab839"></div>
<div class="lg" style="left:373px;top:439.84px;width:197px;line-height:15px"><span style="left:0.00px;letter-spacing:0.295px">committed</span><span style="left:64.30px;letter-spacing:-0.130px">Max: 49.1 MiB</span><span style="left:146.00px;letter-spacing:0.057px">Current: 49.1 MiB</span></div>
<div class="sw" style="left:351px;top:464.0px;background:#2bd8e8"></div>
<div class="lg" style="left:373px;top:457.84px;width:197px;line-height:15px"><span style="left:0.00px;letter-spacing:-0.057px">max</span><span style="left:29.30px;letter-spacing:-0.233px">Max: 1.23 GiB</span><span style="left:109.00px;letter-spacing:-0.022px">Current: 1.23 GiB</span></div>
<div class="abs g  c" style="left:690.82px;top:230.15px;font-size:14px;line-height:18px;letter-spacing:-0.210px;color:#d8d9da;white-space:nowrap;">总内存</div>
<div class="gl" style="left:648px;top:271px;width:162px;height:1px;background:#383a3e"></div>
<div class="gl" style="left:648px;top:301px;width:162px;height:1px;background:#383a3e"></div>
<div class="gl" style="left:648px;top:331px;width:162px;height:1px;background:#383a3e"></div>
<div class="gl" style="left:648px;top:361px;width:162px;height:1px;background:#383a3e"></div>
<div class="gl" style="left:648px;top:391px;width:162px;height:1px;background:#383a3e"></div>
<div class="gl" style="left:682px;top:271px;width:1px;height:121px;background:#383a3e"></div>
<div class="gl" style="left:763px;top:271px;width:1px;height:121px;background:#383a3e"></div>
<div class="abs g " style="left:597.85px;top:264.44px;font-size:12px;line-height:15px;letter-spacing:-0.193px;color:#c7d0d9;white-space:nowrap;">3.73 GiB</div>
<div class="abs g " style="left:597.85px;top:294.44px;font-size:12px;line-height:15px;letter-spacing:-0.193px;color:#c7d0d9;white-space:nowrap;">2.79 GiB</div>
<div class="abs g " style="left:597.85px;top:324.44px;font-size:12px;line-height:15px;letter-spacing:-0.193px;color:#c7d0d9;white-space:nowrap;">1.86 GiB</div>
<div class="abs g " style="left:600.43px;top:354.44px;font-size:12px;line-height:15px;letter-spacing:-0.208px;color:#c7d0d9;white-space:nowrap;">954 MiB</div>
<div class="abs g " style="left:625.58px;top:384.44px;font-size:12px;line-height:15px;letter-spacing:-0.198px;color:#c7d0d9;white-space:nowrap;">0 B</div>
<div class="abs g " style="left:667.20px;top:397.94px;font-size:12px;line-height:15px;letter-spacing:-0.086px;color:#c7d0d9;white-space:nowrap;">00:00</div>
<div class="abs g " style="left:748.50px;top:397.94px;font-size:12px;line-height:15px;letter-spacing:-0.206px;color:#c7d0d9;white-space:nowrap;">12:00</div>
<div class="abs" style="left:803px;top:287px;width:7px;height:104px;background:rgba(43,216,232,.11);"></div>
<div class="abs" style="left:803px;top:287px;width:7px;height:1.5px;background:#27a9b8;"></div>
<div class="abs" style="left:803px;top:383px;width:7px;height:8px;background:rgba(234,184,57,.12);"></div>
<div class="abs" style="left:803px;top:383px;width:7px;height:1px;background:#eab839;"></div>
<svg class="abs" style="left:803px;top:385px;" width="7" height="6" viewBox="0 0 7 6"><path d="M0 5 L7 2" stroke="#73bf69" stroke-width="1.200" fill="none"/><path d="M0 5 L7 2 V6 H0Z" fill="rgba(115,191,105,.25)"/></svg>
<div class="sw" style="left:607px;top:428.0px;background:#73bf69"></div>
<div class="lg" style="left:629px;top:421.84px;width:197px;line-height:15px"><span style="left:0.00px;letter-spacing:-0.030px">used</span><span style="left:32.30px;letter-spacing:-0.122px">Max: 148 MiB</span><span style="left:111.00px;letter-spacing:-0.025px">Current: 148 MiB</span></div>
<div class="sw" style="left:607px;top:446.0px;background:#eab839"></div>
<div class="lg" style="left:629px;top:439.84px;width:197px;line-height:15px"><span style="left:0.00px;letter-spacing:0.295px">committed</span><span style="left:64.30px;letter-spacing:-0.072px">Max: 241 MiB</span><span style="left:143.00px;letter-spacing:-0.025px">Current: 241 MiB</span></div>
<div class="sw" style="left:607px;top:464.0px;background:#2bd8e8"></div>
<div class="lg" style="left:629px;top:457.84px;width:197px;line-height:15px"><span style="left:0.00px;letter-spacing:-0.057px">max</span><span style="left:29.30px;letter-spacing:-0.233px">Max: 3.20 GiB</span><span style="left:109.00px;letter-spacing:-0.022px">Current: 3.20 GiB</span></div>
<svg class="abs" style="left:844px;top:226px;" width="28" height="28" viewBox="0 0 28 28"><path d="M0 0 H28 L0 28Z" fill="#25272b"/></svg>
<div class="abs" style="left:850.2px;top:226.5px;font-family:'Liberation Serif',serif;font-weight:700;font-size:14px;line-height:16px;color:#a4a6a9;-webkit-text-stroke:.45px">i</div>
<div class="abs g lb" style="left:922.45px;top:230.15px;font-size:14px;line-height:18px;letter-spacing:0.000px;color:#d8d9da;white-space:nowrap;"><b style="letter-spacing:0.153px">JVM </b><i>进程内存</i></div>
<div class="gl" style="left:899px;top:271px;width:166px;height:1px;background:#383a3e"></div>
<div class="gl" style="left:899px;top:314px;width:166px;height:1px;background:#383a3e"></div>
<div class="gl" style="left:899px;top:358px;width:166px;height:1px;background:#383a3e"></div>
<div class="gl" style="left:899px;top:402px;width:166px;height:1px;background:#383a3e"></div>
<div class="gl" style="left:899px;top:445px;width:166px;height:1px;background:#383a3e"></div>
<div class="gl" style="left:934px;top:271px;width:1px;height:175px;background:#383a3e"></div>
<div class="gl" style="left:1017px;top:271px;width:1px;height:175px;background:#383a3e"></div>
<div class="abs g " style="left:875.58px;top:264.44px;font-size:12px;line-height:15px;letter-spacing:-0.198px;color:#c7d0d9;white-space:nowrap;">1 B</div>
<div class="abs g " style="left:853.00px;top:307.94px;font-size:12px;line-height:15px;letter-spacing:-0.195px;color:#c7d0d9;white-space:nowrap;">0.750 B</div>
<div class="abs g " style="left:853.00px;top:351.44px;font-size:12px;line-height:15px;letter-spacing:-0.195px;color:#c7d0d9;white-space:nowrap;">0.500 B</div>
<div class="abs g " style="left:853.00px;top:394.94px;font-size:12px;line-height:15px;letter-spacing:-0.195px;color:#c7d0d9;white-space:nowrap;">0.250 B</div>
<div class="abs g " style="left:875.58px;top:438.44px;font-size:12px;line-height:15px;letter-spacing:-0.198px;color:#c7d0d9;white-space:nowrap;">0 B</div>
<div class="abs g " style="left:919.20px;top:451.94px;font-size:12px;line-height:15px;letter-spacing:-0.086px;color:#c7d0d9;white-space:nowrap;">00:00</div>
<div class="abs g " style="left:1002.50px;top:451.94px;font-size:12px;line-height:15px;letter-spacing:-0.206px;color:#c7d0d9;white-space:nowrap;">12:00</div>
<div class="abs g " style="left:942.40px;top:325.95px;font-size:14px;line-height:18px;letter-spacing:-0.062px;color:#c7d0d9;white-space:nowrap;">No data</div>
<svg class="abs" style="left:80px;top:502px;" width="10" height="8" viewBox="0 0 10 8"><path d="M1.500 2 L5 5.700 L8.500 2" stroke="#d8d9da" stroke-width="1.500" fill="none"/></svg>
<div class="abs g " style="left:93.30px;top:495.86px;font-size:16px;line-height:20px;letter-spacing:0.092px;color:#d8d9da;white-space:nowrap;">JVM <i>负载</i></div>
<div class="panel" style="left:77px;top:529px;width:247px;height:258px"></div>
<div class="panel" style="left:332px;top:529px;width:247px;height:258px"></div>
<div class="panel" style="left:588px;top:529px;width:247px;height:258px"></div>
<div class="panel" style="left:843px;top:529px;width:247px;height:258px"></div>
<div class="abs g lb" style="left:164.70px;top:534.15px;font-size:14px;line-height:18px;letter-spacing:0.000px;color:#d8d9da;white-space:nowrap;"><b style="letter-spacing:-0.762px">CPU </b><i>使用率</i></div>
<div class="gl" style="left:131px;top:575px;width:168px;height:1px;background:#383a3e"></div>
<div class="gl" style="left:131px;top:599px;width:168px;height:1px;background:#383a3e"></div>
<div class="gl" style="left:131px;top:623px;width:168px;height:1px;background:#383a3e"></div>
<div class="gl" style="left:131px;top:647px;width:168px;height:1px;background:#383a3e"></div>
<div class="gl" style="left:131px;top:671px;width:168px;height:1px;background:#383a3e"></div>
<div class="gl" style="left:131px;top:695px;width:168px;height:1px;background:#383a3e"></div>
<div class="gl" style="left:166px;top:575px;width:1px;height:121px;background:#383a3e"></div>
<div class="gl" style="left:250px;top:575px;width:1px;height:121px;background:#383a3e"></div>
<div class="abs g " style="left:86.64px;top:568.44px;font-size:12px;line-height:15px;letter-spacing:-0.224px;color:#c7d0d9;white-space:nowrap;">100.0%</div>
<div class="abs g " style="left:93.10px;top:592.44px;font-size:12px;line-height:15px;letter-spacing:-0.225px;color:#c7d0d9;white-space:nowrap;">80.0%</div>
<div class="abs g " style="left:93.10px;top:616.44px;font-size:12px;line-height:15px;letter-spacing:-0.225px;color:#c7d0d9;white-space:nowrap;">60.0%</div>
<div class="abs g " style="left:93.10px;top:640.44px;font-size:12px;line-height:15px;letter-spacing:-0.225px;color:#c7d0d9;white-space:nowrap;">40.0%</div>
<div class="abs g " style="left:93.10px;top:664.44px;font-size:12px;line-height:15px;letter-spacing:-0.225px;color:#c7d0d9;white-space:nowrap;">20.0%</div>
<div class="abs g " style="left:109.23px;top:688.44px;font-size:12px;line-height:15px;letter-spacing:-0.286px;color:#c7d0d9;white-space:nowrap;">0%</div>
<svg class="abs" style="left:290px;top:655px;" width="9" height="42" viewBox="0 0 9 42"><path d="M1 16 L1.800 3 L2.800 14 L3.600 22 L4.500 10 L5.300 26.500 L6.200 13 L7 20 L7.800 6 L8.700 18 L9.500 6 V40 H1Z" fill="rgba(115,191,105,.13)"/><path d="M1 16 L1.800 3 L2.800 14 L3.600 22 L4.500 10 L5.300 26.500 L6.200 13 L7 20 L7.800 6 L8.700 18 L9.500 6" stroke="#73bf69" stroke-width="1" fill="none"/><path d="M1 39.700 H10" stroke="#62b592" stroke-width="1.300"/></svg>
<div class="abs g lb" style="left:440.35px;top:534.15px;font-size:14px;line-height:18px;letter-spacing:0.000px;color:#d8d9da;white-space:nowrap;"><b style="letter-spacing:-0.311px">Load</b></div>
<div class="gl" style="left:371px;top:575px;width:183px;height:1px;background:#383a3e"></div>
<div class="gl" style="left:371px;top:614px;width:183px;height:1px;background:#383a3e"></div>
<div class="gl" style="left:371px;top:653px;width:183px;height:1px;background:#383a3e"></div>
<div class="gl" style="left:371px;top:693px;width:183px;height:1px;background:#383a3e"></div>
<div class="gl" style="left:409px;top:575px;width:1px;height:126px;background:#383a3e"></div>
<div class="gl" style="left:501px;top:575px;width:1px;height:126px;background:#383a3e"></div>
<div class="abs g " style="left:343.02px;top:568.44px;font-size:12px;line-height:15px;letter-spacing:-0.193px;color:#c7d0d9;white-space:nowrap;">10.0</div>
<div class="abs g " style="left:349.47px;top:607.64px;font-size:12px;line-height:15px;letter-spacing:-0.183px;color:#c7d0d9;white-space:nowrap;">7.5</div>
<div class="abs g " style="left:349.47px;top:646.84px;font-size:12px;line-height:15px;letter-spacing:-0.183px;color:#c7d0d9;white-space:nowrap;">5.0</div>
<div class="abs g " style="left:349.47px;top:686.04px;font-size:12px;line-height:15px;letter-spacing:-0.183px;color:#c7d0d9;white-space:nowrap;">2.5</div>
<div class="abs" style="left:546px;top:606px;width:8px;height:95px;background:rgba(115,191,105,.12);"></div>
<div class="abs" style="left:546px;top:605px;width:8px;height:2px;background:#5e9c59;"></div>
<div class="abs g  c" style="left:690.82px;top:534.15px;font-size:14px;line-height:18px;letter-spacing:-0.210px;color:#d8d9da;white-space:nowrap;">线程数</div>
<div class="gl" style="left:617px;top:575px;width:193px;height:1px;background:#383a3e"></div>
<div class="gl" style="left:617px;top:615px;width:193px;height:1px;background:#383a3e"></div>
<div class="gl" style="left:617px;top:655px;width:193px;height:1px;background:#383a3e"></div>
<div class="gl" style="left:617px;top:695px;width:193px;height:1px;background:#383a3e"></div>
<div class="gl" style="left:658px;top:575px;width:1px;height:121px;background:#383a3e"></div>
<div class="gl" style="left:754px;top:575px;width:1px;height:121px;background:#383a3e"></div>
<div class="abs g " style="left:598.79px;top:568.44px;font-size:12px;line-height:15px;letter-spacing:-0.220px;color:#c7d0d9;white-space:nowrap;">30</div>
<div class="abs g " style="left:598.79px;top:608.44px;font-size:12px;line-height:15px;letter-spacing:-0.220px;color:#c7d0d9;white-space:nowrap;">20</div>
<div class="abs g " style="left:598.79px;top:648.44px;font-size:12px;line-height:15px;letter-spacing:-0.220px;color:#c7d0d9;white-space:nowrap;">10</div>
<div class="abs g " style="left:605.25px;top:688.44px;font-size:12px;line-height:15px;letter-spacing:-0.220px;color:#c7d0d9;white-space:nowrap;">0</div>
<div class="abs" style="left:801px;top:579px;width:9px;height:20px;background:rgba(43,216,232,.11);"></div>
<div class="abs" style="left:801px;top:599px;width:9px;height:16px;background:rgba(80,160,140,.22);"></div>
<div class="abs" style="left:801px;top:615px;width:9px;height:81px;background:rgba(130,165,115,.30);"></div>
<div class="abs" style="left:801px;top:578px;width:9px;height:2px;background:#27a9b8;"></div>
<div class="abs" style="left:801px;top:598px;width:9px;height:2px;background:#5e9c78;"></div>
<div class="abs" style="left:801px;top:614px;width:9px;height:2px;background:#d3b04a;"></div>
<svg class="abs" style="left:844px;top:530px;" width="28" height="28" viewBox="0 0 28 28"><path d="M0 0 H28 L0 28Z" fill="#25272b"/></svg>
<div class="abs" style="left:850.2px;top:530.5px;font-family:'Liberation Serif',serif;font-weight:700;font-size:14px;line-height:16px;color:#a4a6a9;-webkit-text-stroke:.45px">i</div>
<div class="abs g  c" style="left:925.13px;top:534.15px;font-size:14px;line-height:18px;letter-spacing:-0.210px;color:#d8d9da;white-space:nowrap;">各状态线程数</div>
<div class="gl" style="left:872px;top:575px;width:193px;height:1px;background:#383a3e"></div>
<div class="gl" style="left:872px;top:610px;width:193px;height:1px;background:#383a3e"></div>
<div class="gl" style="left:872px;top:646px;width:193px;height:1px;background:#383a3e"></div>
<div class="gl" style="left:872px;top:681px;width:193px;height:1px;background:#383a3e"></div>
<div class="gl" style="left:913px;top:575px;width:1px;height:107px;background:#383a3e"></div>
<div class="gl" style="left:1009px;top:575px;width:1px;height:107px;background:#383a3e"></div>
<div class="abs g " style="left:853.79px;top:568.44px;font-size:12px;line-height:15px;letter-spacing:-0.220px;color:#c7d0d9;white-space:nowrap;">15</div>
<div class="abs g " style="left:853.79px;top:603.74px;font-size:12px;line-height:15px;letter-spacing:-0.220px;color:#c7d0d9;white-space:nowrap;">10</div>
<div class="abs g " style="left:860.25px;top:639.04px;font-size:12px;line-height:15px;letter-spacing:-0.220px;color:#c7d0d9;white-space:nowrap;">5</div>
<div class="abs g " style="left:860.25px;top:674.44px;font-size:12px;line-height:15px;letter-spacing:-0.220px;color:#c7d0d9;white-space:nowrap;">0</div>
<div class="abs g " style="left:898.20px;top:688.14px;font-size:12px;line-height:15px;letter-spacing:-0.086px;color:#c7d0d9;white-space:nowrap;">00:00</div>
<div class="abs g " style="left:994.50px;top:688.14px;font-size:12px;line-height:15px;letter-spacing:-0.206px;color:#c7d0d9;white-space:nowrap;">12:00</div>
<div class="abs" style="left:1056px;top:589px;width:9px;height:92px;background:rgba(200,190,90,.16);"></div>
<div class="abs" style="left:1056px;top:667px;width:9px;height:14px;background:rgba(239,132,60,.13);"></div>
<svg class="abs" style="left:1056px;top:585px;" width="9" height="100" viewBox="0 0 9 100"><path d="M0 11 L1.500 4 H9" stroke="#eab839" stroke-width="1.300" fill="none"/><path d="M0 32.500 H9" stroke="#6f9e5e" stroke-width="1.600"/><path d="M0 75 L2 82 H9" stroke="#e8780c" stroke-width="1.200" fill="none"/><path d="M0 96.500 H9" stroke="#b45c7e" stroke-width="1.4"/></svg>
</div>
</body>
</html>
